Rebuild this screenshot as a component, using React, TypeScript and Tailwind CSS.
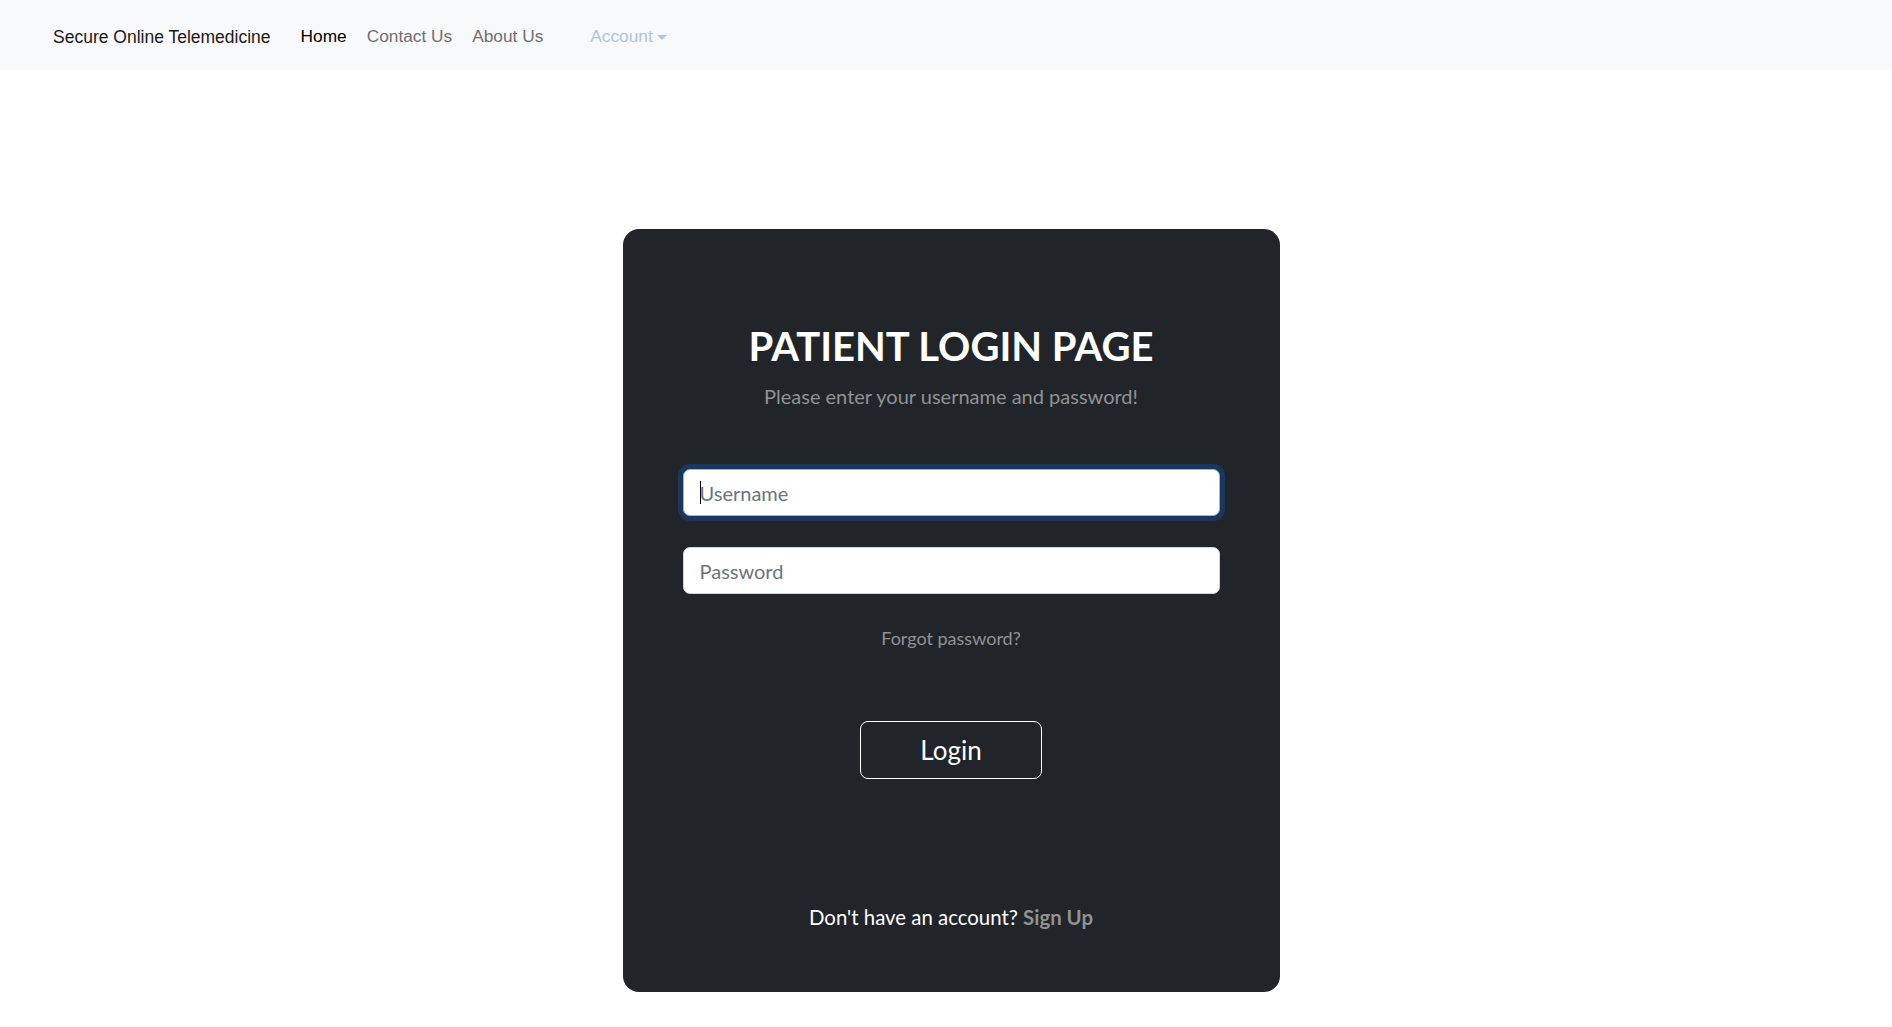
import React from 'react';

const navFont = { fontFamily: '"Liberation Sans", Arial, sans-serif' };
const bodyFont = { fontFamily: 'Lato, "Open Sans", sans-serif' };

const NavBar: React.FC = () => {
  return (
    <nav className="h-[70px] bg-[#f8f9fa] flex items-center pt-[4px] pl-[53px] text-[17.3px]" style={navFont}>
      <span className="text-[#1a1a1a] text-[17.5px] mr-[30px]">Secure Online Telemedicine</span>
      <div className="flex items-center gap-[20px]">
        <a className="text-black">Home</a>
        <a className="text-[#6f6f6f]">Contact Us</a>
        <a className="text-[#6f6f6f]">About Us</a>
      </div>
      <div className="ml-[47px] flex items-center text-[#afc4de]">
        <span>Account</span>
        <span className="ml-[4px] w-0 h-0 border-l-[5px] border-r-[5px] border-t-[5px] border-l-transparent border-r-transparent border-t-[#afc4de]" />
      </div>
    </nav>
  );
};

export default function App() {
  return (
    <div className="min-h-[1027px] bg-white">
      <NavBar />

      {/* Login card */}
      <main className="flex justify-center pt-[159px] pl-[10px]">
        <div
          className="w-[657px] h-[763px] bg-[#212529] rounded-2xl px-[60px] pt-[92px] flex flex-col items-center"
          style={bodyFont}
        >
          <h2 className="text-white text-[40px] leading-[50px] font-bold">PATIENT LOGIN PAGE</h2>
          <p className="mt-[10px] text-[20px] leading-[30px] text-[#909294]">
            Please enter your username and password!
          </p>

          <div className="relative w-full mt-[58px]">
            <input
              type="text"
              placeholder="Username"
              readOnly
              className="w-full h-[47px] bg-white rounded-[7px] border border-[#86b7fe] shadow-[0_0_0_5px_rgba(13,110,253,0.25)] px-[16px] text-[20px] outline-none placeholder:text-[#6c757d]"
            />
            <span className="absolute left-[17px] top-[12px] w-px h-[23px] bg-black" />
          </div>

          <input
            type="password"
            placeholder="Password"
            readOnly
            className="w-full mt-[31px] h-[47px] bg-white rounded-[7px] border border-[#ced4da] px-[16px] text-[20px] outline-none placeholder:text-[#6c757d]"
          />

          <a className="mt-[32px] text-[18px] leading-[24px] text-[#909294]">Forgot password?</a>

          <button className="mt-[71px] w-[182px] h-[58px] border border-white rounded-[8px] text-white text-[26px]">
            Login
          </button>

          <p className="mt-[123px] text-[20.4px] leading-[30px] text-white">
            Don't have an account? <a className="font-bold text-[#909294]">Sign Up</a>
          </p>
        </div>
      </main>
    </div>
  );
}
